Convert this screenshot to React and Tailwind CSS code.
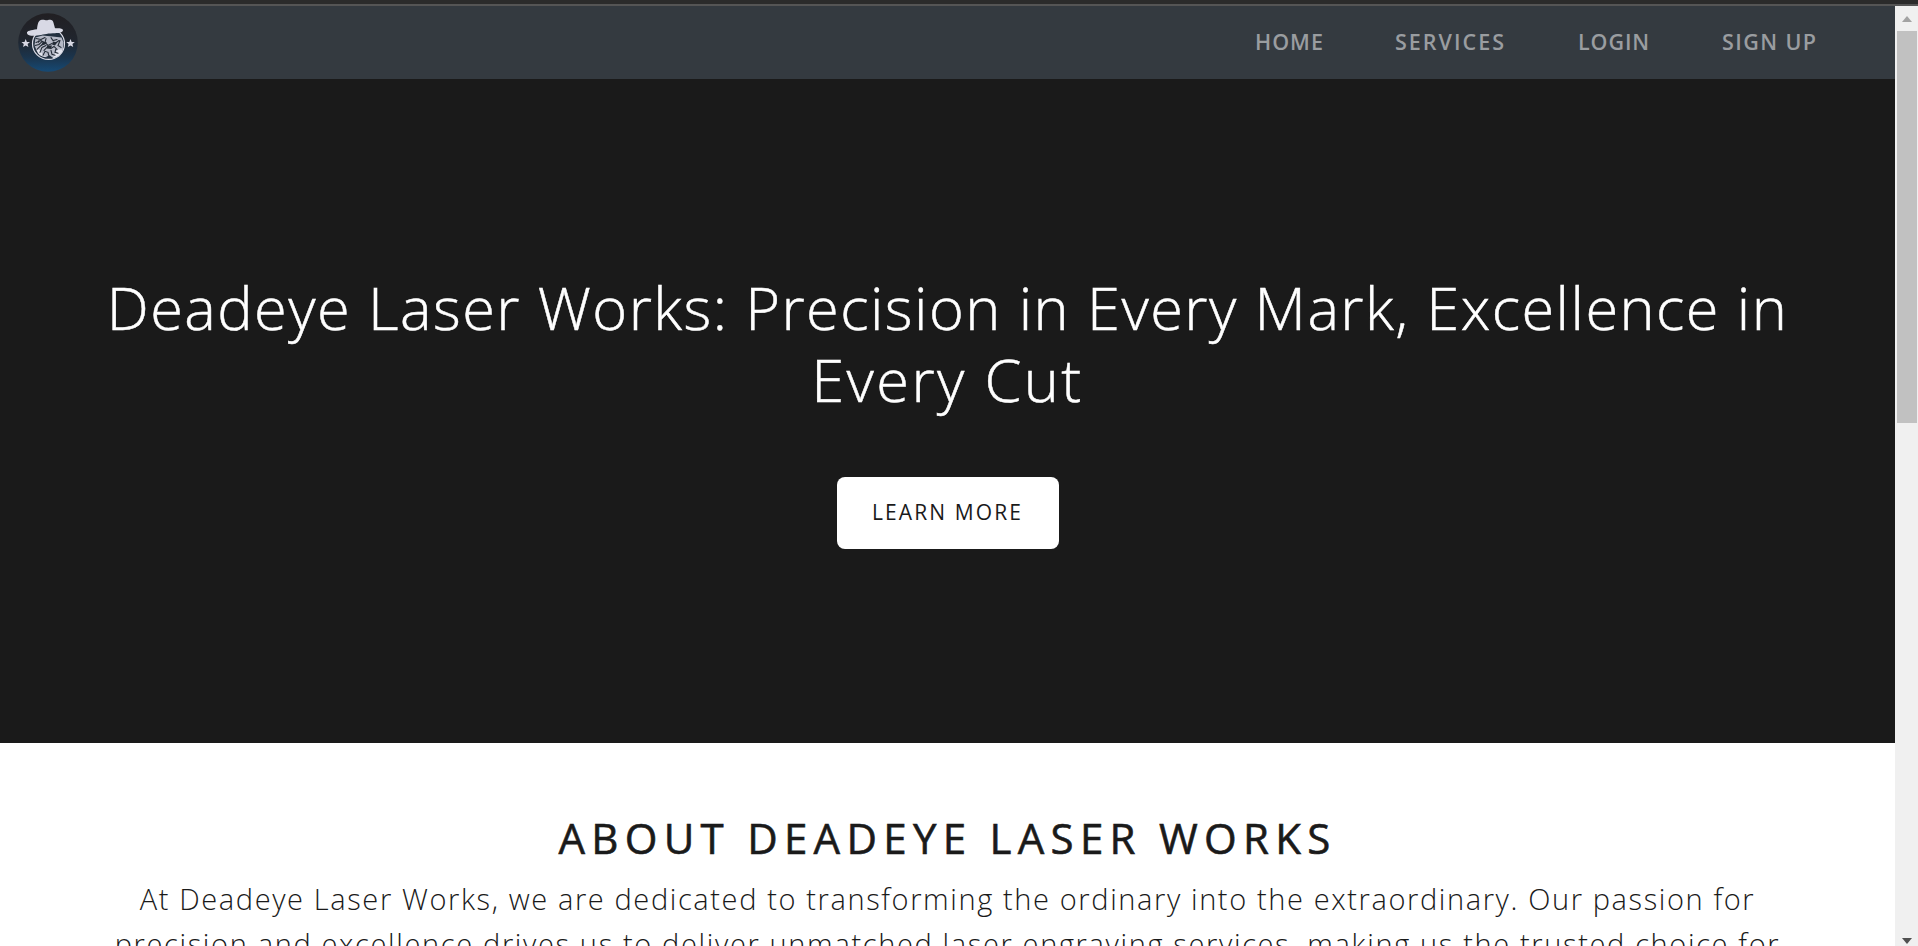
const NAV = [
  { label: "HOME", cls: "w-[69px] tracking-[1px]" },
  { label: "SERVICES", cls: "w-[112px] tracking-[2px]" },
  { label: "LOGIN", cls: "w-[73px] tracking-[0.9px]" },
  { label: "SIGN UP", cls: "w-[96px] tracking-[1.4px]" },
];

function Logo() {
  return (
    <svg viewBox="0 0 60 60" className="h-[59px] w-[60px]" preserveAspectRatio="none" aria-hidden="true">
      <defs>
        <linearGradient id="badge" x1="0" y1="0" x2="0" y2="1">
          <stop offset="0" stopColor="#211f22" />
          <stop offset="0.45" stopColor="#20252e" />
          <stop offset="0.75" stopColor="#1b344c" />
          <stop offset="1" stopColor="#164a75" />
        </linearGradient>
      </defs>
      <circle cx="30" cy="30" r="29.8" fill="url(#badge)" />
      <circle cx="30.5" cy="31.2" r="16" fill="#22303f" stroke="#dcdde8" strokeWidth="1.2" />
      <path d="M17.500 25l7-2 10 1 9 1 2 5-1 9-3 5-6 2-4-3-4 2-6-2-3-5-2-5z" fill="#b5b9c6" />
      <path d="M37 41l3-4 4 0 1-3-1 6-4 4-5 2zM18 36l4 2 3 5 4 2-5-1-4-3z" fill="#e4e5ee" />
      <g fill="none" stroke="#232b36" strokeWidth="1.1" strokeLinecap="round">
        <path d="M18 26l5 1 4-2M18 30l5-2 3 2M17 33l4-1 3-3M19 37l4-4 3-2M22 40l2-5 4-2M28 26l-1 4 3 3 4-2" />
        <path d="M33 25l2 3 4-1M37 31l4-3M42 28l-2 5 3 2M26 38l3-3 4 1 3-2 3 3M25 43l2-4 3 1 1 4M33 38l1 4 3 1M38 36l-1 4 3 1" />
      </g>
      <path d="M25 29l4 1-2 2-4 1zM35 29l4 1-2 3-3-1zM29 33l5 0-1 3-4 0zM20 28l2 0-2 3z" fill="#222a35" />
      <path
        d="M9 20.500C8.500 18 13 17.500 19 16.500C19.500 11 20.500 7.500 23 7C26 6.300 28 8 30 7.200C33 6.200 35 7 35.500 10L37 15.500C41 15.200 45 15.500 45 17.500C45 20 40 20.500 35 20.500C28 20.800 25 22 19 23C14 23.700 9.500 23 9 20.500Z"
        fill="#d8d9e5"
      />
      <path d="M7.700 26.500l1.200 2.900 3.100.2-2.400 2 .8 3.100-2.700-1.700-2.700 1.700.8-3.100-2.400-2 3.100-.2z" fill="#d8d9e5" />
      <path d="M52.500 26.500l1.200 2.900 3.100.2-2.400 2 .8 3.100-2.700-1.700-2.700 1.700.8-3.100-2.400-2 3.100-.2z" fill="#d8d9e5" />
    </svg>
  );
}

function Scrollbar() {
  return (
    <div className="flex w-[23px] shrink-0 flex-col items-center bg-[#f0f0f0]">
      <svg viewBox="0 0 23 25" className="h-[25px] w-[23px] shrink-0" aria-hidden="true">
        <path d="M12 10l5 6H7z" fill="#a3a3a3" />
      </svg>
      <div className="h-[392px] w-5 shrink-0 bg-[#c1c1c1]" />
      <div className="flex-1" />
      <svg viewBox="0 0 23 10" className="h-[10px] w-[23px] shrink-0" aria-hidden="true">
        <path d="M7 2h10l-5 6z" fill="#505050" />
      </svg>
    </div>
  );
}

export default function App() {
  return (
    <div className="flex h-[946px] w-[1918px] flex-col overflow-hidden bg-white font-['Open_Sans',sans-serif] text-[#1a1a1a]">
      <div className="h-1 shrink-0 bg-[#2b2b2b]" />
      <div className="h-0.5 shrink-0 bg-[#555555]" />
      <div className="flex min-h-0 flex-1">
        <div className="flex min-w-0 flex-1 flex-col overflow-hidden">
          <nav className="flex h-[73px] shrink-0 items-center justify-between bg-[#343a40] pl-[18px] pr-[77px]">
            <Logo />
            <div className="flex gap-[71px] pb-0.5 text-[21.500px] font-semibold leading-8 text-[#9a9da0]">
              {NAV.map((n) => (
                <a key={n.label} className={"whitespace-nowrap " + n.cls}>{n.label}</a>
              ))}
            </div>
          </nav>
          <header className="flex h-[664px] shrink-0 flex-col items-center bg-[#1a1a1a] pt-[192px]">
            <h1 className="whitespace-nowrap text-center text-[59.500px] font-light leading-[72px] text-white [-webkit-text-stroke:0.500px_white]">
              <span className="block tracking-[1.45px]">Deadeye Laser Works: Precision in Every Mark, Excellence in</span>
              <span className="block tracking-[2.4px]">Every Cut</span>
            </h1>
            <button className="mt-[62px] flex h-[72px] w-[222px] items-center justify-center rounded-lg bg-white text-[21px] tracking-[2.1px]">
              LEARN MORE
            </button>
          </header>
          <section className="flex flex-col items-center whitespace-nowrap pt-[70px]">
            <h2 className="text-[42px] leading-[50px] tracking-[6.3px] [-webkit-text-stroke:0.600px_#1a1a1a]">ABOUT DEADEYE LASER WORKS</h2>
            <p className="mt-[13px] text-center text-[29px] font-light leading-[45px]">
              <span className="block tracking-[1.61px]">
                At Deadeye Laser Works, we are dedicated to transforming the ordinary into the extraordinary. Our passion for
              </span>
              <span className="block tracking-[1.64px]">
                precision and excellence drives us to deliver unmatched laser engraving services, making us the trusted choice for
              </span>
            </p>
          </section>
        </div>
        <Scrollbar />
      </div>
    </div>
  );
}
